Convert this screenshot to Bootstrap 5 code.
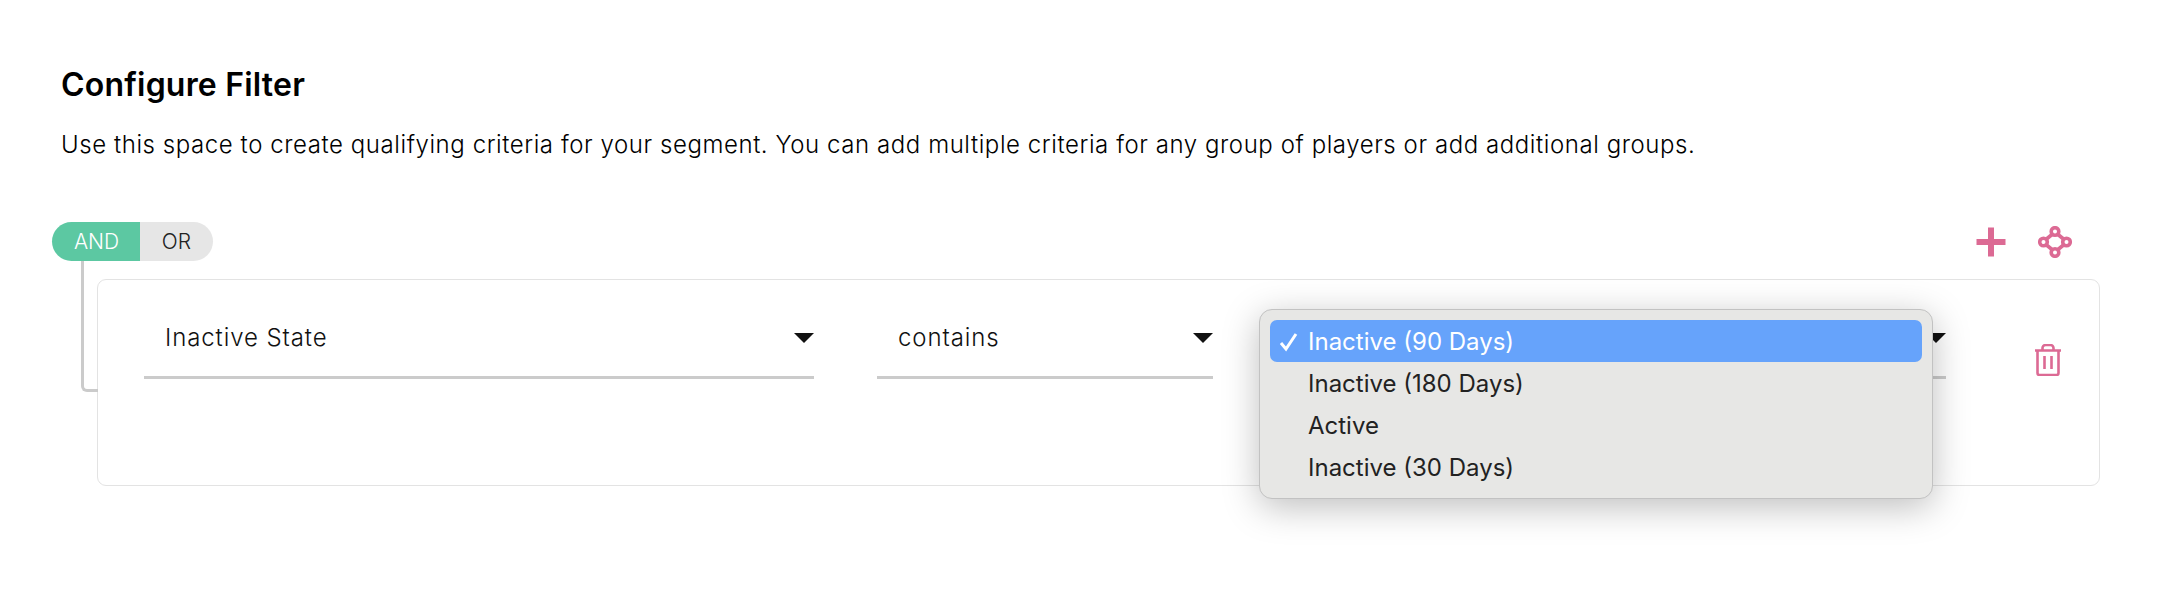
<!DOCTYPE html>
<html lang="en">
<head>
  <meta charset="UTF-8">
  <meta name="viewport" content="width=device-width, initial-scale=1.0">
  <title>Configure Filter</title>
  <link href="https://cdn.jsdelivr.net/npm/bootstrap@5.3.0/dist/css/bootstrap.min.css" rel="stylesheet">

  <style>
    body {
      font-family: Inter, "Liberation Sans", sans-serif;
      color: #111;
      background: #fff;
      min-height: 100vh;
    }

    /* Heading */
    .filter-page {
      padding: 64px 76px 120px 0;
    }
    .filter-title {
      font-size: 32px;
      line-height: 42px;
      font-weight: 600;
      letter-spacing: .2px;
      color: #000;
      margin: 0 0 21px 61px;
    }
    .filter-intro {
      font-size: 24px;
      line-height: 36px;
      font-weight: 300;
      letter-spacing: .57px;
      color: #000;
      margin: 0 0 59px 61px;
    }

    /* AND / OR toggle and group actions */
    .filter-toolbar {
      margin-left: 52px;
      height: 39px;
      padding-right: 28px;
    }
    .logic-btn {
      border: 0;
      border-radius: 0;
      font-size: 21px;
      line-height: 39px;
      padding: 0;
    }
    .logic-and {
      width: 89px;
      background: #5cc8a2;
      color: #fff;
      font-weight: 300;
      border-radius: 20px 0 0 20px;
    }
    .logic-or {
      width: 73px;
      background: #e6e6e6;
      color: #222;
      font-weight: 300;
      border-radius: 0 20px 20px 0;
    }
    .action-gap {
      gap: 32px;
    }
    .action-link {
      color: #dc6a94;
      line-height: 0;
    }

    /* Rule card */
    .rule-group {
      position: relative;
      margin-left: 97px;
      margin-top: 18px;
      height: 207px;
    }
    .group-line {
      position: absolute;
      left: -16px;
      top: -18px;
      width: 17px;
      height: 131px;
      border-left: 3px solid #cbcbcb;
      border-bottom: 3px solid #cbcbcb;
      border-bottom-left-radius: 6px;
    }
    .rule-card {
      height: 100%;
      border: 1px solid #e3e3e3;
      border-radius: 9px;
      background: #fff;
      padding: 0 37px 0 46px;
    }
    .rule-select {
      position: relative;
      margin-top: 24px;
      height: 75px;
      border-bottom: 3px solid #cbcbcb;
      font-size: 24px;
      font-weight: 300;
      letter-spacing: .9px;
      padding: 0 0 4px 21px;
    }
    .rule-select::after {
      content: "";
      position: absolute;
      right: 0;
      top: 29px;
      border-left: 10px solid transparent;
      border-right: 10px solid transparent;
      border-top: 10px solid #111;
    }
    .select-field {
      width: 670px;
      margin-right: 63px;
    }
    .select-op {
      width: 336px;
      margin-right: 46px;
    }
    .select-value {
      width: 687px;
    }
    .rule-delete {
      color: #dc6a94;
      margin-top: 64px;
      line-height: 0;
    }

    /* Open native-looking list */
    .value-menu {
      left: 0;
      top: 5px;
      width: 674px;
      height: 190px;
      padding: 10px;
      margin: 0;
      background: #e7e7e5;
      border: 1px solid #c2c2c2;
      border-radius: 13px;
      box-shadow: 0 8px 36px rgba(0, 0, 0, .26);
      font-size: 24px;
      font-weight: 400;
      letter-spacing: 0;
    }
    .value-menu .dropdown-item {
      position: relative;
      height: 42px;
      line-height: 44px;
      padding: 0 0 0 38px;
      color: #222;
      border-radius: 7px;
    }
    .value-menu .dropdown-item.active {
      background: #66a3fb;
      color: #fff;
    }
    .item-check {
      position: absolute;
      left: 9px;
      top: 12px;
    }
  </style>
</head>
<body>

  <div class="filter-page">
    <h1 class="filter-title">Configure Filter</h1>
    <p class="filter-intro">Use this space to create qualifying criteria for your segment. You can add multiple criteria for any group of players or add additional groups.</p>

    <!-- Toggle and actions -->
    <div class="filter-toolbar d-flex justify-content-between align-items-center">
      <div class="btn-group" role="group">
        <button type="button" class="btn logic-btn logic-and">AND</button>
        <button type="button" class="btn logic-btn logic-or">OR</button>
      </div>
      <div class="d-flex align-items-center action-gap">
        <a href="#" class="action-link" aria-label="Add rule">
          <svg width="30" height="30" viewBox="0 0 30 30"><path d="M12 0.500h6v11.500h11.500v6H18v11.500h-6V18H0.500v-6H12z" fill="currentColor"/></svg>
        </a>
        <a href="#" class="action-link" aria-label="Add group">
          <svg width="34" height="32" viewBox="0 0 34 32" fill="none" stroke="currentColor" stroke-width="3.600">
            <circle cx="17" cy="5.500" r="3.800"/>
            <circle cx="17" cy="26.500" r="3.800"/>
            <circle cx="5.500" cy="16" r="3.800"/>
            <circle cx="28.500" cy="16" r="3.800"/>
            <path d="M14 8.500l-5.500 4.500M20 8.500l5.500 4.500M8.500 19l5.500 4.500M25.500 19L20 23.500"/>
          </svg>
        </a>
      </div>
    </div>

    <!-- Rule group -->
    <div class="rule-group">
      <span class="group-line"></span>
      <div class="rule-card d-flex align-items-start">
        <div class="rule-select select-field d-flex align-items-center">Inactive State</div>
        <div class="rule-select select-op d-flex align-items-center">contains</div>
        <div class="rule-select select-value d-flex align-items-center">
          <ul class="dropdown-menu show value-menu">
            <li>
              <a class="dropdown-item active" href="#">
                <svg class="item-check" width="20" height="20" viewBox="0 0 20 20" fill="none" stroke="#fff" stroke-width="3"><path d="M2 11l5 6 10-15"/></svg>
                Inactive (90 Days)
              </a>
            </li>
            <li><a class="dropdown-item" href="#">Inactive (180 Days)</a></li>
            <li><a class="dropdown-item" href="#">Active</a></li>
            <li><a class="dropdown-item" href="#">Inactive (30 Days)</a></li>
          </ul>
        </div>
        <a href="#" class="rule-delete ms-auto" aria-label="Delete rule">
          <svg width="28" height="32" viewBox="0 0 28 32" fill="none" stroke="currentColor" stroke-width="2.600">
            <path d="M1 6.500h26M8.500 6V4a3 3 0 0 1 3-3h5a3 3 0 0 1 3 3v2"/>
            <path d="M3.500 6.500V29a2 2 0 0 0 2 2h17a2 2 0 0 0 2-2V6.500"/>
            <path d="M10.500 12v13M17.500 12v13"/>
          </svg>
        </a>
      </div>
    </div>
  </div>

  <script src="https://cdn.jsdelivr.net/npm/bootstrap@5.3.0/dist/js/bootstrap.bundle.min.js"></script>
</body>
</html>
